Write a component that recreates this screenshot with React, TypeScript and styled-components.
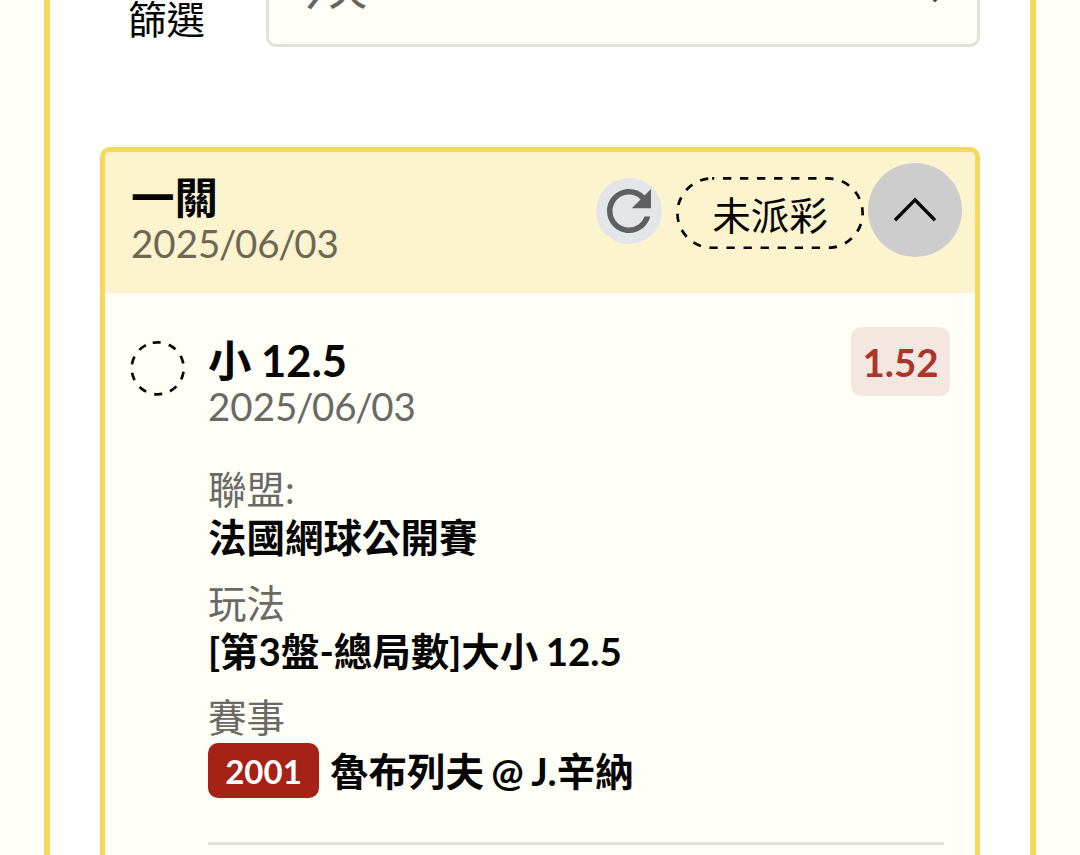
import { Fragment } from "react";
import styled, { createGlobalStyle } from "styled-components";

const GlobalStyle = createGlobalStyle`
  * {
    box-sizing: border-box;
  }

  body {
    margin: 0;
    background-color: #fffef7;
    color: #060606;
    font-family: Lato, "Noto Sans CJK TC", sans-serif;
    font-size: 38.5px;
    overflow: hidden;
  }
`;

const Page = styled.div`
  height: 855px;
  padding: 0 44px;
  overflow: hidden;
`;

const Panel = styled.main`
  display: flex;
  flex-direction: column;
  height: 100%;
  padding: 0 50px;
  background-color: #ffffff;
  border: solid #f4d95c;
  border-width: 0 6px;
  overflow: hidden;
`;

const FilterRow = styled.div`
  display: flex;
  flex: none;
  height: 47px;
  margin-bottom: 100px;
  padding-left: 28px;
`;

const FilterLabel = styled.label`
  width: 138px;
  line-height: 38px;
`;

const Select = styled.div`
  display: flex;
  flex: 1;
  align-items: flex-end;
  justify-content: space-between;
  padding: 0 33px 31px 21px;
  color: #666561;
  background-color: #fffef7;
  border: 3px solid #e2e1da;
  border-top: none;
  border-radius: 0 0 10px 10px;
`;

const SelectValue = styled.span`
  font-weight: 500;
  line-height: 46px;
`;

const SelectArrow = styled.svg`
  width: 18px;
  height: 12px;
  margin-bottom: 10px;
`;

const Card = styled.section`
  flex: none;
  height: 800px;
  background-color: #fffef7;
  border: 5px solid #f4d95c;
  border-radius: 10px;
`;

const CardHeader = styled.header`
  display: flex;
  justify-content: space-between;
  height: 141px;
  padding: 10.5px 13px 0 26px;
  background-color: #fcf3cf;
  border-radius: 5px 5px 0 0;
`;

const Heading = styled.div<{ $top: number }>`
  padding-top: ${(props) => props.$top}px;
`;

const Title = styled.h2`
  margin: 0;
  font-size: 43.5px;
  font-weight: 700;
  line-height: 46px;
  word-spacing: -1px;
`;

const DateLine = styled.div<{ $color: string }>`
  color: ${(props) => props.$color};
  line-height: 47px;
`;

const Slash = styled.span`
  margin: 0 -1.4px;
`;

const Actions = styled.div`
  display: flex;
  align-items: flex-start;
`;

const RefreshButton = styled.button`
  width: 66px;
  height: 66px;
  margin: 15px 14.5px 0 0;
  padding: 0;
  color: #5f5f61;
  background-color: #e4e5e9;
  border: none;
  border-radius: 50%;

  svg {
    display: block;
  }
`;

const StatusPill = styled.div`
  position: relative;
  width: 188px;
  height: 72px;
  margin: 14.5px 4px 0 0;
  line-height: 76px;
  text-align: center;
`;

const PillOutline = styled.svg`
  position: absolute;
  inset: 0;
`;

const CollapseButton = styled.button`
  width: 94px;
  height: 94px;
  padding: 0;
  background-color: #cdcdce;
  border: none;
  border-radius: 50%;

  svg {
    display: block;
  }
`;

const Leg = styled.article`
  display: flex;
  align-items: flex-start;
  padding: 34px 25px 0;
`;

const Ring = styled.svg`
  flex: none;
  width: 56px;
  height: 56px;
  margin: 13px 22px 0 0;
`;

const LegBody = styled.div`
  flex: 1;
`;

const LegTop = styled.div`
  display: flex;
  align-items: flex-start;
  justify-content: space-between;
  margin-bottom: 36px;
`;

const Odds = styled.div`
  width: 99px;
  height: 69px;
  color: #a93629;
  font-weight: 700;
  line-height: 71px;
  text-align: center;
  background-color: #f4e7e1;
  border-radius: 10px;
`;

const Details = styled.dl`
  display: flex;
  flex-direction: column;
  gap: 19px;
  margin: 0 6px 0 0;
  padding-bottom: 44px;
  border-bottom: 3px solid #e3e3dc;
`;

const DetailLabel = styled.dt`
  color: #6a6966;
  line-height: 47px;
`;

const DetailValue = styled.dd`
  display: flex;
  align-items: center;
  margin: 0;
  font-weight: 700;
  line-height: 48px;
  word-spacing: -2px;
`;

const MatchNumber = styled.span`
  width: 111px;
  height: 55px;
  margin: 2px 11px 0 0;
  color: #ffffff;
  font-size: 33px;
  line-height: 56px;
  text-align: center;
  background-color: #a62116;
  border-radius: 10px;
`;

const Teams = styled.span`
  padding-top: 3px;
`;

type DateTextProps = {
    date: string;
    color: string;
};

function DateText(props: DateTextProps) {
    return (
        <DateLine $color={props.color}>
            {props.date.split("/").map((part, index) => (
                <Fragment key={index}>
                    {index > 0 && <Slash>/</Slash>}
                    {part}
                </Fragment>
            ))}
        </DateLine>
    );
}

type Detail = {
    label: string;
    value: string;
    matchNumber?: string;
};

const details: Detail[] = [
    { label: "聯盟:", value: "法國網球公開賽" },
    { label: "玩法", value: "[第3盤-總局數]大小 12.5" },
    { label: "賽事", value: "魯布列夫 @ J.辛納", matchNumber: "2001" },
];

export default function App() {
    return (
        <Page>
            <GlobalStyle />
            <Panel>
                <FilterRow>
                    <FilterLabel>篩選</FilterLabel>
                    <Select>
                        <SelectValue>今天</SelectValue>
                        <SelectArrow viewBox="0 0 18 12">
                            <path d="M2 2l7 7 7-7" fill="none" stroke="#444" strokeWidth="3.5" />
                        </SelectArrow>
                    </Select>
                </FilterRow>
                <Card>
                    <CardHeader>
                        <Heading $top={11.5}>
                            <Title>一關</Title>
                            <DateText date="2025/06/03" color="#6d6853" />
                        </Heading>
                        <Actions>
                            <RefreshButton aria-label="refresh">
                                <svg width="66" height="66" viewBox="0 0 24 24">
                                    <path
                                        fill="currentColor"
                                        d="M17.65 6.35A7.96 7.96 0 0 0 12 4c-4.42 0-7.99 3.58-7.99 8s3.57 8 7.99 8c3.73 0 6.84-2.55 7.73-6h-2.08A5.99 5.99 0 0 1 12 18c-3.31 0-6-2.69-6-6s2.69-6 6-6c1.66 0 3.14.69 4.22 1.78L13 11h7V4l-2.35 2.35z"
                                    />
                                </svg>
                            </RefreshButton>
                            <StatusPill>
                                <PillOutline width="188" height="72" viewBox="0 0 188 72">
                                    <rect
                                        x="1.4"
                                        y="1.4"
                                        width="185.2"
                                        height="69.4"
                                        rx="34.7"
                                        fill="none"
                                        stroke="#060606"
                                        strokeWidth="2.7"
                                        strokeDasharray="8.3 8.75"
                                        strokeDashoffset="6.2"
                                    />
                                </PillOutline>
                                未派彩
                            </StatusPill>
                            <CollapseButton aria-label="collapse">
                                <svg width="94" height="94" viewBox="0 0 94 94">
                                    <path
                                        d="M27 57.2L47 36.9l20 20.3"
                                        fill="none"
                                        stroke="#060606"
                                        strokeWidth="3.4"
                                    />
                                </svg>
                            </CollapseButton>
                        </Actions>
                    </CardHeader>
                    <Leg>
                        <Ring viewBox="0 0 56 56">
                            <circle
                                cx="27.7"
                                cy="28.3"
                                r="26"
                                fill="none"
                                stroke="#060606"
                                strokeWidth="2.7"
                                strokeDasharray="8 8.336"
                                transform="rotate(-101 27.7 28.3)"
                            />
                        </Ring>
                        <LegBody>
                            <LegTop>
                                <Heading $top={10}>
                                    <Title>小 12.5</Title>
                                    <DateText date="2025/06/03" color="#6a6966" />
                                </Heading>
                                <Odds>1.52</Odds>
                            </LegTop>
                            <Details>
                                {details.map((detail) => (
                                    <div key={detail.label}>
                                        <DetailLabel>{detail.label}</DetailLabel>
                                        <DetailValue>
                                            {detail.matchNumber ? (
                                                <>
                                                    <MatchNumber>{detail.matchNumber}</MatchNumber>
                                                    <Teams>{detail.value}</Teams>
                                                </>
                                            ) : (
                                                detail.value
                                            )}
                                        </DetailValue>
                                    </div>
                                ))}
                            </Details>
                        </LegBody>
                    </Leg>
                </Card>
            </Panel>
        </Page>
    );
}
